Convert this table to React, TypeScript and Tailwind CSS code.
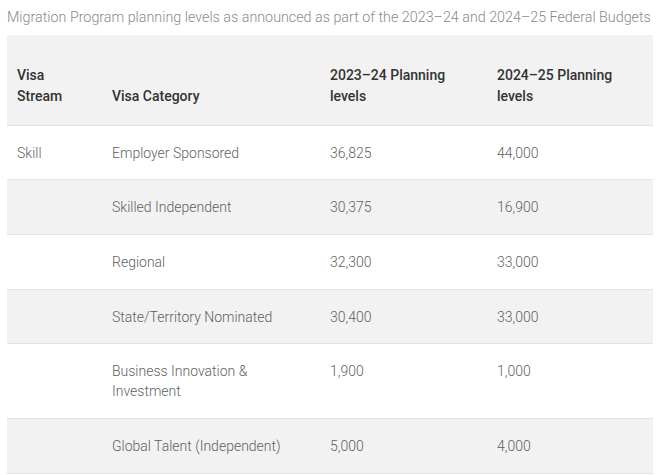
const rows = [
  { stream: 'Skill', category: 'Employer Sponsored', a: '36,825', b: '44,000' },
  { stream: '', category: 'Skilled Independent', a: '30,375', b: '16,900' },
  { stream: '', category: 'Regional', a: '32,300', b: '33,000' },
  { stream: '', category: 'State/Territory Nominated', a: '30,400', b: '33,000' },
  { stream: '', category: 'Business Innovation & Investment', a: '1,900', b: '1,000' },
  { stream: '', category: 'Global Talent (Independent)', a: '5,000', b: '4,000' },
];

export default function App() {
  return (
    <div className="min-h-screen bg-white px-[7px] pt-[6px] font-['Roboto',sans-serif]">
      <p className="text-[14.3px] font-light leading-[22px] text-[#8a8a8a] whitespace-nowrap">
        Migration Program planning levels as announced as part of the 2023–24 and 2024–25 Federal Budgets
      </p>
      <table className="mt-[7px] w-[646px] table-fixed border-collapse text-[14px]">
        <colgroup>
          <col className="w-[95px]" />
          <col className="w-[218px]" />
          <col className="w-[167px]" />
          <col className="w-[166px]" />
        </colgroup>
        <thead>
          <tr className="h-[90px] bg-[#f2f2f2] border-b border-[#e4e4e4] text-left align-bottom text-[#333] font-medium leading-[21px]">
            <th className="pl-[10px] pr-3 pb-[18px] font-medium">Visa Stream</th>
            <th className="pl-[10px] pr-3 pb-[18px] font-medium">Visa Category</th>
            <th className="pl-[10px] pr-3 pb-[18px] font-medium">2023–24 Planning levels</th>
            <th className="pl-[10px] pr-3 pb-[18px] font-medium">2024–25 Planning levels</th>
          </tr>
        </thead>
        <tbody className="font-light text-[#5f5f5f] leading-[20px]">
          {rows.map((r, i) => (
            <tr
              key={r.category}
              className={`align-top border-b border-[#e4e4e4] ${i % 2 === 1 ? 'bg-[#f2f2f2]' : 'bg-white'}`}
            >
              <td className="pl-[10px] pr-3 pt-[17px] pb-[16.7px]">{r.stream}</td>
              <td className="pl-[10px] pr-[30px] pt-[17px] pb-[16.7px]">{r.category}</td>
              <td className="pl-[10px] pr-3 pt-[17px] pb-[16.7px]">{r.a}</td>
              <td className="pl-[10px] pr-3 pt-[17px] pb-[16.7px]">{r.b}</td>
            </tr>
          ))}
        </tbody>
      </table>
    </div>
  );
}
